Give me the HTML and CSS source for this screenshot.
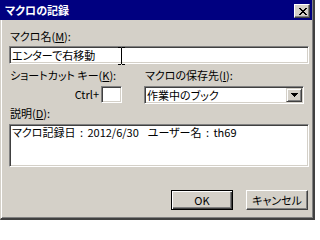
FILE: index.html
```html
<!DOCTYPE html>
<html lang="ja">
<head>
<meta charset="utf-8">
<title>マクロの記録</title>
<link rel="stylesheet" href="styles.css">
</head>
<body>
<div class="window">
  <div class="titlebar">
    <span class="title">マクロの記録</span>
    <span class="close">
      <svg width="8" height="7" viewBox="0 0 8 7" shape-rendering="crispEdges" fill="#000">
        <rect x="0" y="0" width="2" height="1"/><rect x="6" y="0" width="2" height="1"/>
        <rect x="1" y="1" width="2" height="1"/><rect x="5" y="1" width="2" height="1"/>
        <rect x="2" y="2" width="4" height="1"/>
        <rect x="3" y="3" width="2" height="1"/>
        <rect x="2" y="4" width="4" height="1"/>
        <rect x="1" y="5" width="2" height="1"/><rect x="5" y="5" width="2" height="1"/>
        <rect x="0" y="6" width="2" height="1"/><rect x="6" y="6" width="2" height="1"/>
      </svg>
    </span>
  </div>
  <div class="content">
    <div class="lbl">マクロ名(<u>M</u>):</div>
    <div class="edit name">エンターで右移動</div>
    <div class="row2">
      <div class="col-left">
        <div class="lbl">ショートカット キー(<u>K</u>):</div>
        <div class="ctrl"><span class="ctrl-lbl">Ctrl+</span><span class="edit key"></span></div>
      </div>
      <div class="col-right">
        <div class="lbl">マクロの保存先(<u>I</u>):</div>
        <div class="edit combo">
          <span class="combo-text">作業中のブック</span>
          <span class="dd">
            <svg width="7" height="4" viewBox="0 0 7 4" shape-rendering="crispEdges" fill="#000">
              <rect x="0" y="0" width="7" height="1"/><rect x="1" y="1" width="5" height="1"/>
              <rect x="2" y="2" width="3" height="1"/><rect x="3" y="3" width="1" height="1"/>
            </svg>
          </span>
        </div>
      </div>
    </div>
    <div class="lbl desc-lbl">説明(<u>D</u>):</div>
    <div class="edit desc">マクロ記録日 : 2012/6/30  ユーザー名 : th69</div>
    <div class="buttons">
      <button class="btn default" type="button">OK</button>
      <button class="btn" type="button">キャンセル</button>
    </div>
  </div>
  <svg class="ibeam" width="7" height="18" viewBox="0 0 7 18" shape-rendering="crispEdges" fill="#000">
    <rect x="0" y="0" width="3" height="1"/><rect x="4" y="0" width="3" height="1"/>
    <rect x="3" y="1" width="1" height="16"/>
    <rect x="0" y="17" width="3" height="1"/><rect x="4" y="17" width="3" height="1"/>
  </svg>
</div>
</body>
</html>
```
FILE: styles.css
```css
html, body {
  margin: 0;
  padding: 0;
}
body {
  width: 315px;
  height: 220px;
  overflow: hidden;
  font-family: "Noto Sans CJK JP", "Noto Sans CJK SC", sans-serif;
  font-size: 11px;
  font-feature-settings: "palt";
  color: #000;
}
.window {
  position: relative;
  box-sizing: border-box;
  width: 315px;
  height: 220px;
  background: #d4d0c8;
  border-left: 1px solid #d4d0c8;
  border-right: 2px solid #404040;
  border-bottom: 2px solid #404040;
  box-shadow: inset 1px 0 #fff, inset -1px -1px #808080;
}
.titlebar {
  display: flex;
  align-items: flex-start;
  justify-content: space-between;
  height: 20px;
  margin-left: -1px;
  margin-right: 1px;
  background: #000080;
  color: #fff;
}
.title {
  font-weight: bold;
  line-height: 20px;
  padding-left: 5px;
}
.close {
  display: flex;
  align-items: center;
  justify-content: center;
  box-sizing: border-box;
  width: 16px;
  height: 14px;
  margin: 4px 2px 0 0;
  background: #d4d0c8;
  border: 1px solid;
  border-color: #fff #404040 #404040 #fff;
  box-shadow: inset -1px -1px #808080;
}
.close svg {
  display: block;
  margin-left: 1px;
}
.content {
  padding: 10px 0 0 8px;
}
.lbl {
  height: 13px;
  line-height: 13px;
  padding-left: 1px;
  white-space: nowrap;
}
.edit {
  box-sizing: border-box;
  background: #fff;
  border: 1px solid;
  border-color: #808080 #fff #fff #808080;
  box-shadow: inset 1px 1px #404040, inset -1px -1px #d4d0c8;
}
.name {
  margin-top: 3px;
  width: 300px;
  height: 18px;
  padding: 0 2px;
  line-height: 16px;
  white-space: nowrap;
}
.row2 {
  display: flex;
  margin-top: 5px;
}
.col-left {
  width: 135px;
}
.ctrl {
  display: flex;
  align-items: center;
  justify-content: flex-end;
  margin-top: 4px;
  padding-right: 22px;
}
.ctrl-lbl {
  line-height: 13px;
}
.key {
  display: block;
  width: 21px;
  height: 17px;
  margin-left: 2px;
}
.col-right {
  width: 160px;
}
.combo {
  display: flex;
  align-items: center;
  justify-content: space-between;
  margin-top: 4px;
  width: 160px;
  height: 18px;
  padding: 0 1px 0 2px;
}
.combo-text {
  line-height: 16px;
  white-space: nowrap;
}
.dd {
  display: flex;
  align-items: center;
  justify-content: center;
  box-sizing: border-box;
  width: 16px;
  height: 14px;
  background: #d4d0c8;
  border: 1px solid;
  border-color: #d4d0c8 #404040 #404040 #d4d0c8;
  box-shadow: inset 1px 1px #fff, inset -1px -1px #808080;
}
.dd svg {
  display: block;
}
.desc-lbl {
  margin-top: 3px;
}
.desc {
  margin-top: 4px;
  width: 300px;
  height: 43px;
  padding: 1px 2px;
  line-height: 13px;
  white-space: pre;
  word-spacing: 2px;
}
.buttons {
  display: flex;
  justify-content: flex-end;
  gap: 13px;
  width: 300px;
  margin-top: 23px;
  padding-right: 1px;
  box-sizing: border-box;
}
.btn {
  appearance: none;
  box-sizing: border-box;
  width: 62px;
  height: 20px;
  margin: 0;
  padding: 0;
  font: inherit;
  line-height: 16px;
  color: #000;
  background: #d4d0c8;
  border: 1px solid;
  border-color: #fff #404040 #404040 #fff;
  box-shadow: inset -1px -1px #808080;
}
.btn.default {
  border-color: #000;
  box-shadow: inset 1px 1px #fff, inset -1px -1px #404040, inset -2px -2px #808080;
}
.ibeam {
  position: absolute;
  left: 117px;
  top: 47px;
  display: block;
}
```
